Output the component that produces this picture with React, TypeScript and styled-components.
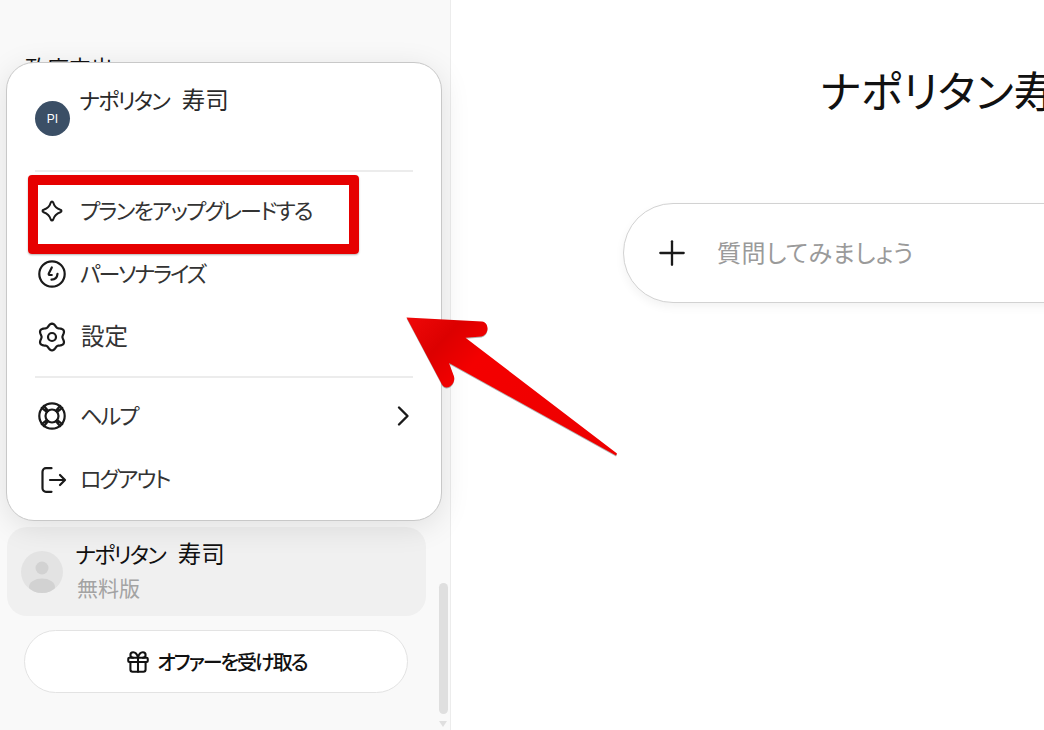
import React from 'react';
import styled, { createGlobalStyle } from 'styled-components';
import { Gift, Plus } from 'lucide-react';

const GlobalStyle = createGlobalStyle`
    html, body {
        margin: 0;
        padding: 0;
        background: #ffffff;
    }
    body {
        width: 1044px;
        height: 730px;
        overflow: hidden;
        font-family: 'Noto Sans CJK JP', 'Noto Sans', sans-serif;
        font-feature-settings: 'palt';
        color: #1f1f1f;
    }
`;

const Page = styled.div`
    position: relative;
    display: flex;
    width: 1044px;
    height: 730px;
    overflow: hidden;
`;

const Sidebar = styled.aside`
    position: relative;
    flex: 0 0 451px;
    display: flex;
    background: #f9f9f9;
    border-right: 1px solid #ececec;
    box-sizing: border-box;
`;

const SidebarContent = styled.div`
    flex: 1;
    display: flex;
    flex-direction: column;
    padding: 51px 13px 37px 7px;
`;

const HistoryTitle = styled.div`
    padding-left: 18px;
    font-size: 22px;
    line-height: 30px;
    color: #111;
    flex: 1;
`;

const ScrollTrack = styled.div`
    flex: 0 0 11px;
    display: flex;
    flex-direction: column;
    align-items: flex-start;
    justify-content: flex-end;
    padding-bottom: 3px;
`;

const ScrollThumb = styled.div`
    width: 9px;
    height: 131px;
    border-radius: 5px;
    background: #dfdfdf;
`;

const ScrollArrow = styled.div`
    width: 0;
    height: 0;
    margin-top: 7px;
    border-left: 4.5px solid transparent;
    border-right: 4.5px solid transparent;
    border-top: 6px solid #dfdfdf;
`;

const UserRow = styled.div`
    display: flex;
    align-items: center;
    gap: 13px;
    height: 89px;
    padding-left: 14px;
    border-radius: 20px;
    background: #f0f0f0;
`;

const UserAvatar = styled.div`
    width: 42px;
    height: 42px;
    border-radius: 50%;
    overflow: hidden;
    background: #e3e3e3;
    flex: none;
`;

const UserText = styled.div`
    display: flex;
    flex-direction: column;
    padding-bottom: 4px;
`;

const UserName = styled.div`
    font-size: 23.5px;
    line-height: 34px;
    word-spacing: 7.5px;
    color: #111;
`;

const UserPlan = styled.div`
    padding-left: 1px;
    font-size: 21px;
    line-height: 34px;
    color: #a3a3a3;
`;

const OfferButton = styled.div`
    display: flex;
    align-items: center;
    justify-content: center;
    gap: 6px;
    height: 63px;
    margin: 14px 18px 0 17px;
    border: 1px solid #e3e3e3;
    border-radius: 32px;
    background: #ffffff;
    box-sizing: border-box;
    font-size: 20px;
    font-weight: 500;
    letter-spacing: -1.95px;
    color: #111;
`;

const Menu = styled.div`
    position: absolute;
    left: 6px;
    top: 62px;
    width: 436px;
    height: 459px;
    box-sizing: border-box;
    display: flex;
    flex-direction: column;
    padding: 0 28px;
    background: #ffffff;
    border: 1px solid #c8c8c8;
    border-radius: 28px;
    box-shadow: 0 6px 30px rgba(0, 0, 0, 0.1);
`;

const MenuHeader = styled.div`
    display: flex;
    align-items: flex-start;
    gap: 10px;
    height: 107px;
    padding-top: 18px;
    box-sizing: border-box;
`;

const InitialsAvatar = styled.div`
    width: 35px;
    height: 35px;
    margin-top: 20px;
    border-radius: 50%;
    background: #3b4f66;
    color: #ffffff;
    display: flex;
    align-items: center;
    justify-content: center;
    font-size: 12px;
    font-family: 'Liberation Sans', sans-serif;
    flex: none;
`;

const MenuName = styled.div`
    font-size: 23.5px;
    line-height: 36px;
    word-spacing: 7.5px;
    color: #2a2a2a;
`;

const Divider = styled.div<{ $before: number; $after: number }>`
    height: 2px;
    margin: ${(p) => p.$before}px 0 ${(p) => p.$after}px;
    background: #ececec;
    flex: none;
`;

const MenuItem = styled.div`
    display: flex;
    align-items: center;
    gap: 12px;
    height: 63px;
    flex: none;
    font-size: 23.5px;
    color: #333;
`;

const MenuIcon = styled.span`
    width: 34px;
    display: flex;
    justify-content: center;
    flex: none;
`;

const MenuLabel = styled.span`
    flex: 1;
    padding-bottom: 4px;
`;

const Kana = styled.span<{ $spacing?: number }>`
    margin-left: -1px;
    font-size: 22px;
    letter-spacing: ${(p) => p.$spacing ?? -1.8}px;
`;

const ChevronSlot = styled.span`
    display: flex;
    margin-right: 3px;
`;

const Main = styled.main`
    flex: 1;
    min-width: 0;
    display: flex;
    flex-direction: column;
    padding-left: 172px;
    overflow: hidden;
    background: #ffffff;
`;

const Title = styled.h1`
    margin: 59px 0 0 197px;
    font-size: 43px;
    line-height: 60px;
    font-weight: 400;
    white-space: nowrap;
    color: #111;
`;

const Composer = styled.div`
    display: flex;
    align-items: center;
    gap: 25px;
    width: 700px;
    height: 100px;
    margin-top: 84px;
    padding-left: 28px;
    box-sizing: border-box;
    flex: none;
    border: 1px solid #d2d2d2;
    border-radius: 50px;
    background: #ffffff;
    box-shadow: 0 4px 10px rgba(0, 0, 0, 0.05);
`;

const Placeholder = styled.span`
    padding-bottom: 4px;
    font-size: 24px;
    letter-spacing: 0.5px;
    color: #9a9a9a;
`;

const RedFrame = styled.div`
    position: absolute;
    left: 28px;
    top: 175px;
    width: 331px;
    height: 79px;
    box-sizing: border-box;
    border: 10px solid #e60000;
    border-radius: 4px;
    box-shadow: 0 1px 2px rgba(0, 0, 0, 0.3);
`;

const ArrowSvg = styled.svg`
    position: absolute;
    left: 400px;
    top: 310px;
    filter: drop-shadow(0 1px 0.5px rgba(0, 0, 0, 0.3));
`;

// six soft lobes, one pointing straight up
function gearOutline() {
    const points: string[] = [];
    for (let i = 0; i < 72; i++) {
        const angle = (i / 72) * Math.PI * 2;
        const radius = 11.9 + 1.5 * Math.cos(angle * 6);
        const x = 15 + radius * Math.sin(angle);
        const y = 15 - radius * Math.cos(angle);
        points.push(`${x.toFixed(2)} ${y.toFixed(2)}`);
    }
    return `M${points.join('L')}Z`;
}

function SparkleIcon() {
    return (
        <svg width="24" height="24" viewBox="0 0 24 24" fill="none" stroke="#1a1a1a" strokeWidth="2" strokeLinejoin="round">
            <path d="M12 2.4c.6 0 .9.4 1.2 1.1 1.1 3.7 3.4 6.100 7.200 7.300.7.200 1.100.6 1.100 1.200s-.4 1-1.100 1.200c-3.800 1.200-6.100 3.600-7.200 7.300-.3.700-.6 1.100-1.200 1.100s-.9-.4-1.200-1.100c-1.100-3.700-3.400-6.100-7.200-7.300-.7-.2-1.100-.6-1.100-1.200s.4-1 1.100-1.200c3.800-1.200 6.100-3.600 7.200-7.300.3-.7.6-1.100 1.200-1.100z" />
        </svg>
    );
}

function PersonalizeIcon() {
    return (
        <svg width="30" height="30" viewBox="0 0 30 30" fill="none" stroke="#1a1a1a" strokeWidth="2.2" strokeLinecap="round" strokeLinejoin="round">
            <circle cx="15" cy="15" r="12.7" />
            <path d="M14.800 8.500 11.800 14.500c-.4.900.2 1.500 1 1.500h2" />
            <path d="M20.500 14.800c-.3 3.500-2.700 5.700-6 5.900" />
        </svg>
    );
}

function GearIcon() {
    return (
        <svg width="30" height="30" viewBox="0 0 30 30" fill="none" stroke="#1a1a1a" strokeWidth="2.2" strokeLinejoin="round">
            <path d={gearOutline()} />
            <circle cx="15" cy="15" r="4" />
        </svg>
    );
}

function HelpIcon() {
    return (
        <svg width="30" height="30" viewBox="0 0 30 30" fill="none" stroke="#1a1a1a" strokeWidth="2.2" strokeLinecap="round">
            <circle cx="15" cy="15" r="12.700" />
            <circle cx="15" cy="15" r="6.500" />
            <path d="M6.800 4.800 11 9.800M4.800 6.800l5 4.200M23.200 4.800 19 9.800M25.200 6.800l-5 4.200M6.800 25.200l4.200-5M4.800 23.200l5-4.200M23.200 25.200 19 20.200M25.200 23.200l-5-4.200" />
        </svg>
    );
}

function LogoutIcon() {
    return (
        <svg width="30" height="30" viewBox="0 0 30 30" fill="none" stroke="#1a1a1a" strokeWidth="2.2" strokeLinecap="round" strokeLinejoin="round">
            <path d="M14.500 4.200H9a3.500 3.500 0 0 0-3.500 3.500v16.600a3.500 3.500 0 0 0 3.500 3.500h5.500" />
            <path d="M13 16h14.500M23 11l5 5-5 5" />
        </svg>
    );
}

function ChevronIcon() {
    return (
        <svg width="14" height="22" viewBox="0 0 14 22" fill="none" stroke="#1a1a1a" strokeWidth="2.4" strokeLinecap="round" strokeLinejoin="round">
            <path d="M3 2.500 11.500 11 3 19.500" />
        </svg>
    );
}

function PersonIcon() {
    return (
        <svg width="42" height="42" viewBox="0 0 42 42">
            <circle cx="21" cy="17" r="6.500" fill="#d2d2d2" />
            <ellipse cx="21" cy="36" rx="13" ry="8.500" fill="#d2d2d2" />
        </svg>
    );
}

export default function App() {
    return (
        <Page>
            <GlobalStyle />
            <Sidebar>
                <SidebarContent>
                    <HistoryTitle>政府支出</HistoryTitle>
                    <UserRow>
                        <UserAvatar>
                            <PersonIcon />
                        </UserAvatar>
                        <UserText>
                            <UserName>
                                <Kana>ナポリタン</Kana> 寿司
                            </UserName>
                            <UserPlan>無料版</UserPlan>
                        </UserText>
                    </UserRow>
                    <OfferButton>
                        <Gift size={26} strokeWidth={1.9} color="#111" />
                        オファーを受け取る
                    </OfferButton>
                </SidebarContent>
                <ScrollTrack>
                    <ScrollThumb />
                    <ScrollArrow />
                </ScrollTrack>
                <Menu>
                    <MenuHeader>
                        <InitialsAvatar>PI</InitialsAvatar>
                        <MenuName>
                            <Kana>ナポリタン</Kana> 寿司
                        </MenuName>
                    </MenuHeader>
                    <Divider $before={0} $after={7} />
                    <MenuItem>
                        <MenuIcon>
                            <SparkleIcon />
                        </MenuIcon>
                        <MenuLabel>
                            <Kana>プランをアップグレードする</Kana>
                        </MenuLabel>
                    </MenuItem>
                    <MenuItem>
                        <MenuIcon>
                            <PersonalizeIcon />
                        </MenuIcon>
                        <MenuLabel>
                            <Kana $spacing={-2.1}>パーソナライズ</Kana>
                        </MenuLabel>
                    </MenuItem>
                    <MenuItem>
                        <MenuIcon>
                            <GearIcon />
                        </MenuIcon>
                        <MenuLabel>設定</MenuLabel>
                    </MenuItem>
                    <Divider $before={8} $after={6} />
                    <MenuItem>
                        <MenuIcon>
                            <HelpIcon />
                        </MenuIcon>
                        <MenuLabel>
                            <Kana>ヘルプ</Kana>
                        </MenuLabel>
                        <ChevronSlot>
                            <ChevronIcon />
                        </ChevronSlot>
                    </MenuItem>
                    <MenuItem>
                        <MenuIcon>
                            <LogoutIcon />
                        </MenuIcon>
                        <MenuLabel>
                            <Kana>ログアウト</Kana>
                        </MenuLabel>
                    </MenuItem>
                </Menu>
            </Sidebar>
            <Main>
                <Title>ナポリタン寿司さん、お元気ですか？</Title>
                <Composer>
                    <Plus size={40} strokeWidth={1.4} color="#1a1a1a" />
                    <Placeholder>質問してみましょう</Placeholder>
                </Composer>
            </Main>
            <RedFrame />
            <ArrowSvg width="230" height="160" viewBox="400 310 230 160">
                <defs>
                    <linearGradient id="arrowFill" x1="0" y1="0" x2="1" y2="0.6">
                        <stop offset="0" stopColor="#f00808" />
                        <stop offset="0.2" stopColor="#dc0000" />
                        <stop offset="0.38" stopColor="#f40000" />
                        <stop offset="1" stopColor="#ee0000" />
                    </linearGradient>
                </defs>
                <path
                    fill="url(#arrowFill)"
                    d="M406.500 317.500 482 321.500c3.500.3 5.500 3.500 5.500 7 0 4-2.500 7-6 8l-16 1.200L617 453.500 616 455.500 449 363l5 13.500c1 4-1 9-5 10.500-3 1.200-5.500 0-7-2.500z"
                />
            </ArrowSvg>
        </Page>
    );
}
